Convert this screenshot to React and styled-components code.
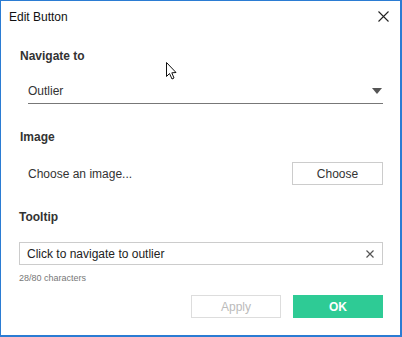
import React from 'react'
import styled, { createGlobalStyle } from 'styled-components'

const GlobalStyle = createGlobalStyle`
  html, body {
    margin: 0;
    padding: 0;
    background: #ffffff;
  }
  body {
    font-family: "Liberation Sans", Arial, sans-serif;
    color: #333333;
  }
`

const Window = styled.div`
  position: relative;
  width: 402px;
  height: 337px;
  box-sizing: border-box;
  border: 1px solid #2b7cd3;
  border-right-width: 2px;
  border-bottom-width: 2px;
  background: #ffffff;
  display: flex;
  flex-direction: column;
`

const TitleBar = styled.div`
  height: 31px;
  display: flex;
  align-items: center;
  justify-content: space-between;
  padding: 0 11px 0 8px;
`

const Title = styled.span`
  font-size: 12px;
  color: #111111;
`

const CloseButton = styled.button`
  border: 0;
  background: none;
  padding: 0;
  width: 11px;
  height: 11px;
  display: flex;
  cursor: pointer;
`

const Body = styled.div`
  display: flex;
  flex-direction: column;
  padding: 0 17px 0 18px;
`

const Label = styled.div`
  font-size: 12px;
  font-weight: bold;
  line-height: 16px;
  color: #333333;
  margin-top: ${({ top }) => top}px;
  padding-left: ${({ indent }) => indent || 0}px;
`

const Select = styled.div`
  margin: 15px 0 0 9px;
  height: 24px;
  border-bottom: 1px solid #777777;
  display: flex;
  align-items: center;
  justify-content: space-between;
  font-size: 12px;
`

const Caret = styled.span`
  width: 0;
  height: 0;
  border-left: 5px solid transparent;
  border-right: 5px solid transparent;
  border-top: 6px solid #555555;
  margin-right: 1px;
`

const ImageRow = styled.div`
  margin: 17px 0 0 9px;
  display: flex;
  align-items: center;
  justify-content: space-between;
  font-size: 12px;
`

const Button = styled.button`
  box-sizing: border-box;
  width: ${({ w }) => w || 90}px;
  height: 23px;
  font-family: inherit;
  font-size: 12px;
  border: 1px solid ${({ primary, disabled }) => primary ? '#2ecb95' : disabled ? '#dddddd' : '#cccccc'};
  background: ${({ primary }) => primary ? '#2ecb95' : '#ffffff'};
  color: ${({ primary, disabled }) => primary ? '#ffffff' : disabled ? '#bbbbbb' : '#333333'};
  font-weight: ${({ primary }) => primary ? 'bold' : 'normal'};
  padding: 0;
  cursor: pointer;
`

const Input = styled.div`
  margin-top: 17px;
  height: 23px;
  box-sizing: border-box;
  border: 1px solid #cccccc;
  display: flex;
  align-items: center;
  justify-content: space-between;
  padding: 0 8px 0 7px;
  font-size: 12px;
  color: #222222;
`

const Counter = styled.div`
  margin-top: 7px;
  font-size: 9px;
  line-height: 12px;
  color: #777777;
`

const Footer = styled.div`
  margin-top: 11px;
  display: flex;
  justify-content: flex-end;
  gap: 12px;
`

const Cursor = styled.svg`
  position: absolute;
  left: 164px;
  top: 60px;
`

const XIcon = ({ size, stroke, width }) => (
  <svg width={size} height={size} viewBox={`0 0 ${size} ${size}`}>
    <path d={`M0.5 0.5 L${size - 0.5} ${size - 0.5} M${size - 0.5} 0.5 L0.5 ${size - 0.5}`} stroke={stroke} strokeWidth={width} />
  </svg>
)

const App = () => (
  <>
    <GlobalStyle />
    <Window>
      <TitleBar>
        <Title>Edit Button</Title>
        <CloseButton aria-label="Close">
          <XIcon size={11} stroke="#222" width={1.1} />
        </CloseButton>
      </TitleBar>
      <Body>
        <Label top={16} indent={1}>Navigate to</Label>
        <Select>
          <span>Outlier</span>
          <Caret />
        </Select>

        <Label top={25} indent={1}>Image</Label>
        <ImageRow>
          <span>Choose an image...</span>
          <Button w={91}>Choose</Button>
        </ImageRow>

        <Label top={24}>Tooltip</Label>
        <Input>
          <span>Click to navigate to outlier</span>
          <XIcon size={8} stroke="#555" width={1.2} />
        </Input>
        <Counter>28/80 characters</Counter>

        <Footer>
          <Button disabled>Apply</Button>
          <Button primary>OK</Button>
        </Footer>
      </Body>
      <Cursor width="14" height="20" viewBox="0 0 14 20">
        <path d="M1.5 1.5 L1.5 15.5 L4.5 12.5 L7 18 L9 17 L6.8 11.8 L11 11.5 Z" fill="#fff" stroke="#111" strokeWidth="1" strokeLinejoin="miter" />
      </Cursor>
    </Window>
  </>
)

export default App
